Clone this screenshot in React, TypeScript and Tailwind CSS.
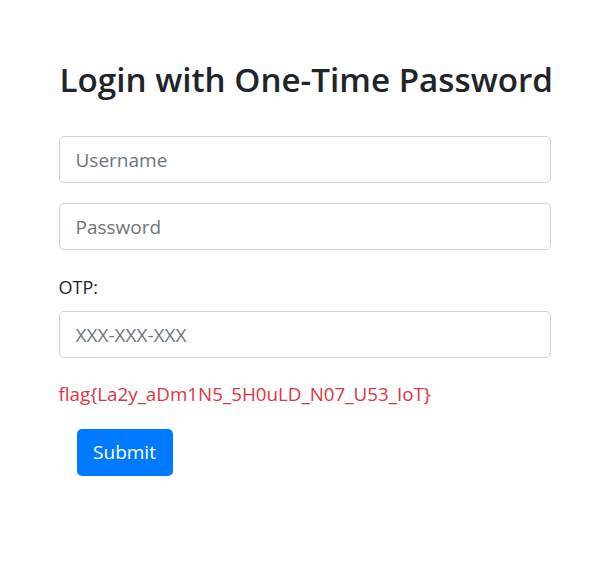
import React from "react";

export default function App() {
  const font = { fontFamily: '"Open Sans", "Noto Sans", sans-serif' };

  return (
    <div className="min-h-screen bg-white" style={font}>
      <div className="mx-auto w-[492px] pt-[61px]">
        <h2 className="whitespace-nowrap text-[33.2px] leading-[38px] font-semibold text-[#212529] pl-px">
          Login with One-Time Password
        </h2>

        <form className="mt-[37px] flex flex-col" onSubmit={(e) => e.preventDefault()}>
          <input
            type="text"
            placeholder="Username"
            className="h-[47px] w-full rounded-[5px] border border-[#ced4da] px-4 text-[19px] text-[#495057] placeholder:text-[#6c757d] outline-none"
          />
          <input
            type="password"
            placeholder="Password"
            className="mt-[20px] h-[47px] w-full rounded-[5px] border border-[#ced4da] px-4 text-[19px] text-[#495057] placeholder:text-[#6c757d] outline-none"
          />

          <label className="mt-[22px] text-[18px] leading-[30px] text-[#212529]">OTP:</label>
          <input
            type="text"
            placeholder="XXX-XXX-XXX"
            className="mt-[9px] h-[47px] w-full rounded-[5px] border border-[#ced4da] px-4 text-[19px] text-[#495057] placeholder:text-[#6c757d] outline-none"
          />

          <p className="mt-[21px] text-[18.8px] leading-[30px] text-[#dc3545]">
            flag{"{"}La2y_aDm1N5_5H0uLD_N07_U53_IoT{"}"}
          </p>

          <div className="mt-[20px] pl-[18px]">
            <button
              type="submit"
              className="h-[47px] w-[96px] rounded-[5px] bg-[#007bff] text-[19px] text-white"
            >
              Submit
            </button>
          </div>
        </form>
      </div>
    </div>
  );
}
